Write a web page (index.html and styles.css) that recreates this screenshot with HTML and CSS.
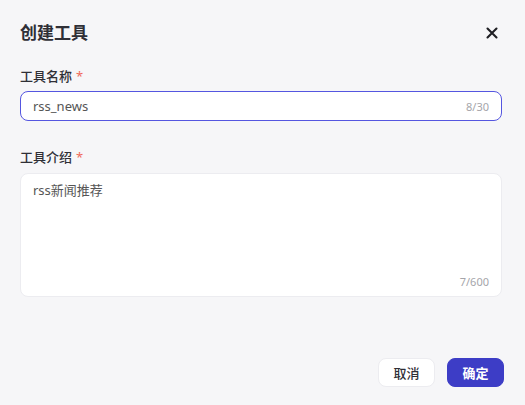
FILE: index.html
```html
<!DOCTYPE html>
<html lang="zh">
<head>
<meta charset="utf-8">
<title>创建工具</title>
<link rel="stylesheet" href="styles.css">
</head>
<body>
<div class="dialog">
  <div class="header">
    <h1 class="title">创建工具</h1>
    <button class="close" aria-label="关闭">
      <svg width="12" height="12" viewBox="0 0 12 12"><path d="M1.5 1.5L10.5 10.5M10.5 1.5L1.5 10.5" stroke="#1f1f24" stroke-width="2.1" stroke-linecap="round"/></svg>
    </button>
  </div>
  <div class="form">
    <div class="group">
      <label class="label">工具名称<span class="req">*</span></label>
      <div class="field field-input">
        <input class="input" type="text" value="rss_news">
        <span class="count">8/30</span>
      </div>
    </div>
    <div class="group group-2">
      <label class="label">工具介绍<span class="req">*</span></label>
      <div class="field field-area">
        <textarea class="area">rss新闻推荐</textarea>
        <span class="count count-area">7/600</span>
      </div>
    </div>
  </div>
  <div class="footer">
    <button class="btn btn-cancel">取消</button>
    <button class="btn btn-ok">确定</button>
  </div>
</div>
</body>
</html>
```
FILE: styles.css
```css
* { box-sizing: border-box; }
html, body {
  margin: 0;
  padding: 0;
  background: #f6f6f8;
  font-family: "Noto Sans", "Noto Sans CJK SC", sans-serif;
  color: #333;
}
.dialog {
  width: 525px;
  height: 405px;
  padding: 21px 23px 0 20px;
  display: flex;
  flex-direction: column;
}
.header {
  display: flex;
  align-items: center;
  justify-content: space-between;
  height: 24px;
}
.title {
  margin: 0;
  font-size: 17px;
  line-height: 24px;
  font-weight: 700;
  color: #2f2f36;
}
.close {
  border: 0;
  background: transparent;
  padding: 0;
  width: 12px;
  height: 12px;
  margin-right: 4px;
  display: flex;
}
.form {
  display: flex;
  flex-direction: column;
  margin-top: 21px;
}
.group {
  display: flex;
  flex-direction: column;
}
.group-2 { margin-top: 26px; }
.label {
  font-size: 13px;
  line-height: 20px;
  font-weight: 500;
  color: #2f2f36;
  margin-bottom: 5px;
}
.group-2 .label { margin-bottom: 6px; }
.req {
  color: #f06a5a;
  margin-left: 4px;
  font-weight: 400;
}
.field {
  background: #fff;
  border-radius: 8px;
  display: flex;
}
.field-input {
  height: 30px;
  border: 1px solid #5556e0;
  align-items: center;
  padding: 0 12px 0 12px;
}
.input {
  flex: 1;
  border: 0;
  outline: none;
  background: transparent;
  font-family: inherit;
  font-size: 13px;
  color: #555;
  padding: 0;
}
.count {
  font-size: 11px;
  color: #a5a5aa;
}
.field-area {
  height: 124px;
  border: 1px solid #ececf0;
  flex-direction: column;
  padding: 6px 12px 7px 12px;
}
.area {
  flex: 1;
  border: 0;
  outline: none;
  resize: none;
  background: transparent;
  font-family: inherit;
  font-size: 13px;
  line-height: 20px;
  color: #555;
  padding: 0;
  margin: 0;
}
.count-area {
  align-self: flex-end;
  line-height: 14px;
}
.footer {
  display: flex;
  justify-content: flex-end;
  gap: 12px;
  margin-top: 61px;
  margin-right: -2px;
}
.btn {
  width: 57px;
  height: 29px;
  border-radius: 8px;
  font-family: inherit;
  font-size: 13px;
  font-weight: 700;
  padding: 0;
}
.btn-cancel {
  background: #fff;
  border: 1px solid #ececf0;
  color: #2f2f36;
  font-weight: 500;
}
.btn-ok {
  background: #3d3dc6;
  border: 1px solid #3d3dc6;
  color: #fff;
}
```
